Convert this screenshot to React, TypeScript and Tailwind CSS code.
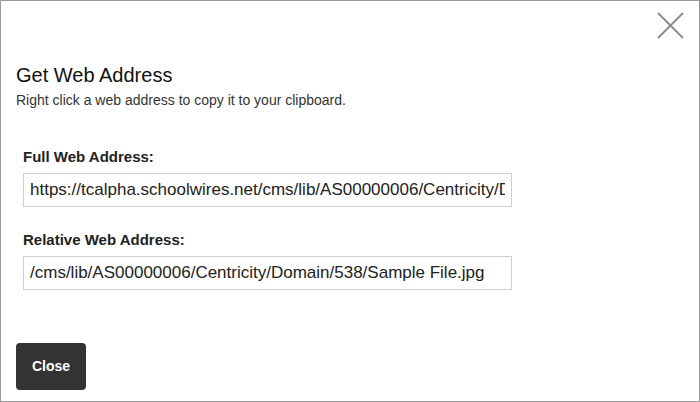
import React from "react";

const fullUrl =
  "https://tcalpha.schoolwires.net/cms/lib/AS00000006/Centricity/Domain/538/Sample File.jpg";
const relativeUrl = "/cms/lib/AS00000006/Centricity/Domain/538/Sample File.jpg";

function AddressField({ label, value }: { label: string; value: string }) {
  return (
    <div className="flex flex-col">
      <label className="text-[15px] leading-[18px] font-bold text-[#222] mb-[7px]">
        {label}
      </label>
      <input
        type="text"
        readOnly
        value={value}
        className="w-[489px] h-[34px] border border-[#cfcfcf] bg-white px-[6px] text-[17px] text-[#222] outline-none"
        style={{ fontFamily: '"Liberation Sans", Arial, sans-serif' }}
      />
    </div>
  );
}

export default function App() {
  return (
    <div
      className="relative w-[700px] h-[402px] bg-white border border-[#9a9a9a] overflow-hidden"
      style={{ fontFamily: '"Liberation Sans", Arial, sans-serif' }}
    >
      {/* close icon */}
      <button className="absolute top-[11px] right-[15px] w-[27px] h-[27px]" aria-label="Close dialog">
        <svg viewBox="0 0 27 27" className="w-[27px] h-[27px]">
          <path d="M1 1 L26 26 M26 1 L1 26" stroke="#8a8a8a" strokeWidth="1.8" fill="none" />
        </svg>
      </button>

      <div className="pl-[15px] pt-[62px]">
        <h1 className="text-[20px] leading-[24px] font-normal text-[#111]">Get Web Address</h1>
        <p className="mt-[5px] text-[14px] leading-[16px] text-[#333]">
          Right click a web address to copy it to your clipboard.
        </p>

        <div className="pl-[7px] mt-[40px] flex flex-col gap-[24px]">
          <AddressField label="Full Web Address:" value={fullUrl} />
          <AddressField label="Relative Web Address:" value={relativeUrl} />
        </div>

        <button className="mt-[53px] w-[70px] h-[47px] rounded-[4px] bg-[#333333] text-white text-[14px] font-bold">
          Close
        </button>
      </div>
    </div>
  );
}
